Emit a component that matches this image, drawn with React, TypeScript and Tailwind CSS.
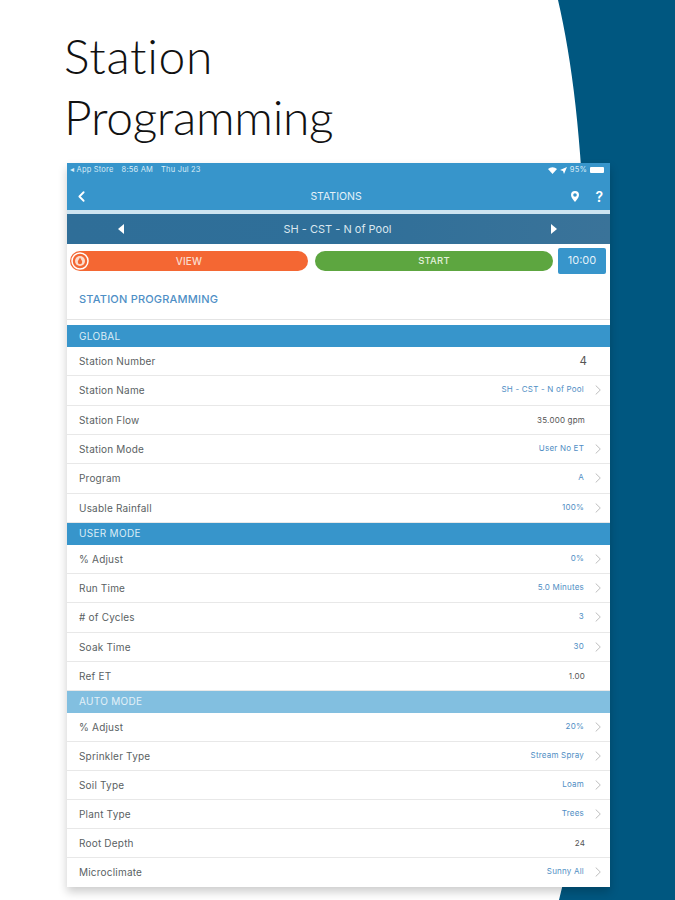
import { ChevronLeft } from "lucide-react"

type Row = { label: string; value: string; link?: boolean; big?: boolean }

const globalRows: Row[] = [
  { label: "Station Number", value: "4", big: true },
  { label: "Station Name", value: "SH - CST - N of Pool", link: true },
  { label: "Station Flow", value: "35.000 gpm" },
  { label: "Station Mode", value: "User No ET", link: true },
  { label: "Program", value: "A", link: true },
  { label: "Usable Rainfall", value: "100%", link: true },
]

const userRows: Row[] = [
  { label: "% Adjust", value: "0%", link: true },
  { label: "Run Time", value: "5.0 Minutes", link: true },
  { label: "# of Cycles", value: "3", link: true },
  { label: "Soak Time", value: "30", link: true },
  { label: "Ref ET", value: "1.00" },
]

const autoRows: Row[] = [
  { label: "% Adjust", value: "20%", link: true },
  { label: "Sprinkler Type", value: "Stream Spray", link: true },
  { label: "Soil Type", value: "Loam", link: true },
  { label: "Plant Type", value: "Trees", link: true },
  { label: "Root Depth", value: "24" },
  { label: "Microclimate", value: "Sunny All", link: true },
]

const SectionHeader = ({ title, light }: { title: string; light?: boolean }) => (
  <div
    className={`h-[22px] pl-3 flex items-center text-[10px] tracking-[0.3px] ${
      light ? "bg-[#82bfe0] text-[#e4f1f8]" : "bg-[#3795cb] text-[#dcedf6]"
    }`}
  >
    {title}
  </div>
)

const SettingRow = ({ row, height }: { row: Row; height: string }) => (
  <div
    className={`${height} pl-3 pr-[9px] flex items-center justify-between border-b border-[#e8e8e8] last:border-b-0 bg-white`}
  >
    <span className="mt-[1px] text-[10px] tracking-[0.2px] text-[#5a5f63]">{row.label}</span>
    <div className="flex items-center">
      <span
        className={
          row.big
            ? "text-[11.5px] text-[#555] mr-[14px]"
            : row.link
              ? "text-[8px] tracking-[0.2px] text-[#4f8ec4] -mt-[2px]"
              : "text-[8px] tracking-[0.2px] text-[#555] mr-[16px]"
        }
      >
        {row.value}
      </span>
      {row.link && (
        <svg width="6" height="10" viewBox="0 0 6 10" fill="none" className="ml-[11px]">
          <path d="M0.7 0.5 L5.3 5 L0.7 9.5" stroke="#bdbdbd" strokeWidth="1" />
        </svg>
      )}
    </div>
  </div>
)

export default function App() {
  return (
    <div className="relative w-[675px] h-[900px] overflow-hidden bg-white font-['Inter',sans-serif]">
      {/* background swoosh */}
      <svg className="absolute inset-0" width="675" height="900" viewBox="0 0 675 900">
        <path d="M558 0 C 572 60 582 140 585 250 L 585 700 C 582 790 572 850 559 900 L 675 900 L 675 0 Z" fill="#005780" />
      </svg>

      <div className="relative pl-[64px] pt-[25px]">
        <h1 className="font-['Lato',sans-serif] font-light text-[#111] text-[48px] leading-[61px] tracking-[-0.3px]">
          <span className="tracking-[0.7px]">Station</span>
          <br />
          Programming
        </h1>
      </div>

      <div className="relative ml-[67px] mt-[16px] w-[543px] bg-white shadow-[0_5px_9px_rgba(0,0,0,0.2)]">
        <div className="h-[47px] bg-[#3795cb] text-white">
          <div className="h-[14px] px-[3px] flex items-center justify-between text-[7.5px] tracking-[0.2px] text-[#d8ecf7]">
            <div className="flex gap-[8px]">
              <span>◂ App Store</span>
              <span>8:56 AM</span>
              <span>Thu Jul 23</span>
            </div>
            <div className="flex items-center gap-[3px] pr-[3px]">
              <svg width="9" height="7" viewBox="0 0 9 7">
                <path d="M0 2 A6.5 6.5 0 0 1 9 2 L4.5 7 Z" fill="#fff" />
              </svg>
              <svg width="7" height="7" viewBox="0 0 7 7">
                <path d="M7 0 L0 3 L3 4 L4 7 Z" fill="#fff" />
              </svg>
              <span>95%</span>
              <span className="w-[14px] h-[6px] rounded-[1px] bg-white" />
            </div>
          </div>
          <div className="relative h-[33px] flex items-center justify-center">
            <ChevronLeft size={17} strokeWidth={2.6} className="absolute left-[6px] top-[11px]" />
            <span className="text-[10.5px] text-[#e3f1f9] mt-[6px] -ml-[5px]">STATIONS</span>
            <svg width="8" height="11" viewBox="0 0 8 11" className="absolute right-[31px] top-[14px]">
              <path
                fillRule="evenodd"
                d="M4 0 A4 4 0 0 1 8 4 C8 6.8 5.4 9 4 11 C2.6 9 0 6.8 0 4 A4 4 0 0 1 4 0 Z M4 2.2 A1.8 1.8 0 1 0 4 5.8 A1.8 1.8 0 1 0 4 2.2 Z"
                fill="#fff"
              />
            </svg>
            <span className="absolute right-[7px] top-[10px] text-[14px] font-semibold leading-[20px]">?</span>
          </div>
        </div>

        <div className="h-[4px] bg-[#cde4f1]" />

        <div className="h-[30px] bg-gradient-to-r from-[#2f6e98] via-[#2f6f99] to-[#3a7399] flex items-center justify-between pl-[51px] pr-[53px] text-[#dbe7ef]">
          <svg width="6" height="10" viewBox="0 0 6 10">
            <path d="M6 0 L0 5 L6 10 Z" fill="#fff" />
          </svg>
          <span className="text-[11px]">SH - CST - N of Pool</span>
          <svg width="6" height="10" viewBox="0 0 6 10">
            <path d="M0 0 L6 5 L0 10 Z" fill="#fff" />
          </svg>
        </div>

        <div className="h-[31px] px-[3px] flex items-center">
          <div className="relative w-[238px] h-[20px] mt-[3px] rounded-full bg-[#f46733] flex items-center justify-center text-[10px] tracking-[0.2px] text-[#fbdccd] font-medium">
            <svg width="18" height="18" viewBox="0 0 18 18" className="absolute left-[1px] top-[1px]">
              <circle cx="9" cy="9" r="8" fill="none" stroke="#fff" strokeWidth="1.5" />
              <circle cx="9" cy="9" r="5" fill="#fbdccd" />
              <path d="M9 5.5 C 10 7.5 11.2 8.5 11.2 10 A2.2 2.2 0 0 1 6.8 10 C 6.8 8.5 8 7.5 9 5.5 Z" fill="#f46733" />
            </svg>
            VIEW
          </div>
          <div className="ml-[7px] w-[238px] h-[20px] mt-[3px] rounded-full bg-[#5da640] flex items-center justify-center text-[9.5px] tracking-[0.2px] text-[#e2f0da] font-medium">
            START
          </div>
          <div className="ml-[5px] w-[48px] h-[26px] mt-[2px] rounded-[2px] bg-[#3795cb] flex items-center justify-center text-[11px] text-[#e3f1f9]">
            10:00
          </div>
        </div>

        <div className="h-[45px] pl-3 pt-[16px] border-b border-[#e4e4e4]">
          <div className="text-[11px] font-medium text-[#4f8fc6] tracking-[0.2px]">STATION PROGRAMMING</div>
        </div>

        <div className="mt-[5px]">
          <SectionHeader title="GLOBAL" />
          {globalRows.map((row) => (
            <SettingRow key={row.label} row={row} height="h-[29.33px]" />
          ))}
          <SectionHeader title="USER MODE" />
          {userRows.map((row) => (
            <SettingRow key={row.label} row={row} height="h-[29.2px]" />
          ))}
          <SectionHeader title="AUTO MODE" light />
          {autoRows.map((row) => (
            <SettingRow key={row.label} row={row} height="h-[29px]" />
          ))}
        </div>
      </div>
    </div>
  )
}
